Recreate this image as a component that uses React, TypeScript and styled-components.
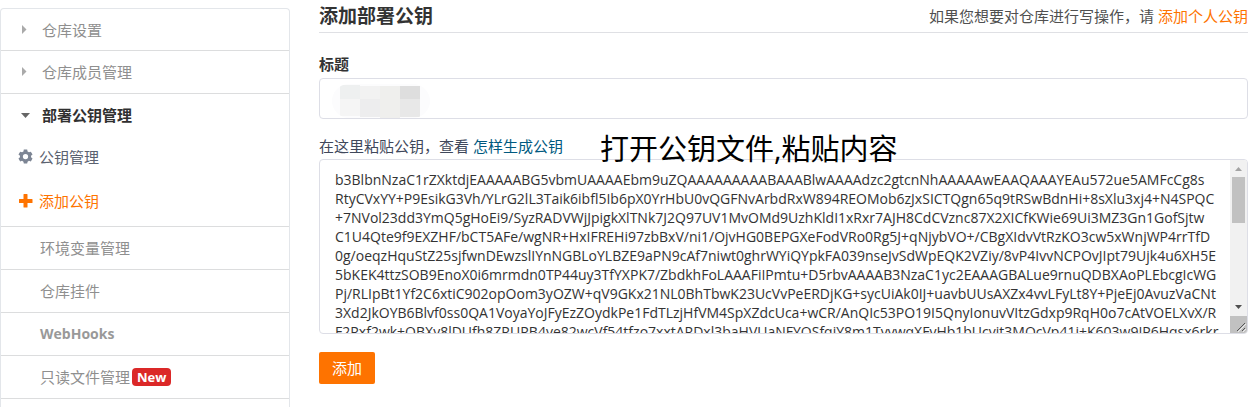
import React, { useState } from 'react';
import styled, { createGlobalStyle, css } from 'styled-components';

const GlobalStyle = createGlobalStyle`
  *, *::before, *::after { box-sizing: border-box; }
  html, body, #root { height: 100%; }
  body {
    margin: 0;
    overflow: hidden;
    background: #fff;
    color: #40485b;
    font: 15px/20px "Open Sans", "Noto Sans CJK SC", sans-serif;
  }
  a { text-decoration: none; }
`;

const Page = styled.div`
  display: flex;
  gap: 29px;
  height: 100%;
  padding-right: 3px;
  overflow: hidden;
`;

const Sidebar = styled.nav`
  flex: none;
  width: 290px;
  margin-top: 8px;
  border: 1px solid #e3e6ea;
  border-bottom: 0;
  border-radius: 4px 4px 0 0;
`;

const itemLayout = css`
  display: flex;
  align-items: center;
  width: 100%;
  height: 42px;
`;

const GroupButton = styled.button<{ $open?: boolean }>`
  ${itemLayout}
  gap: 11px;
  padding: 0 0 0 20px;
  border: 0;
  background: none;
  font: inherit;
  font-weight: ${p => (p.$open ? 700 : 400)};
  color: ${p => (p.$open ? '#303030' : '#8f8f8f')};
`;

const Section = styled.div`
  border-bottom: 1px solid #dcddde;
  &:first-child ${GroupButton} { height: 41px; }
`;

const Caret = styled.svg`
  flex: none;
  width: 10px;
  height: 10px;
`;

const PlainLink = styled.a`
  ${itemLayout}
  gap: 2px;
  padding-left: 39px;
  color: #8f8f8f;
`;

const Strong = styled.span`
  font-weight: 700;
  font-size: 14px;
  color: #999;
`;

const NewBadge = styled.span`
  padding: 0 5px;
  border-radius: 4px;
  background: #db2828;
  color: #fff;
  font-size: 13px;
  font-weight: 700;
  line-height: 18px;
`;

const SubLink = styled.a<{ $active?: boolean }>`
  ${itemLayout}
  height: 41px;
  gap: 6px;
  padding-left: 17px;
  color: ${p => (p.$active ? '#fe7300' : '#5b6270')};
  &:last-child { height: 49px; padding-bottom: 2px; }
`;

const SubIcon = styled.svg`
  flex: none;
  width: 15px;
  height: 15px;
`;

const Main = styled.main`
  flex: 1;
  min-width: 0;
`;

const Header = styled.header`
  display: flex;
  justify-content: space-between;
  align-items: center;
  height: 33px;
  border-bottom: 1px solid #dfe0e4;
`;

const Title = styled.h1`
  margin: 0;
  font-size: 19px;
  line-height: 28px;
  font-weight: 700;
  color: #333;
`;

const Hint = styled.p`
  margin: 0;
  color: #505050;
`;

const OrangeLink = styled.a`
  color: #fe7300;
`;

const Form = styled.form`
  display: flex;
  flex-direction: column;
  padding-top: 21px;
`;

const Label = styled.label`
  margin-bottom: 4px;
  font-weight: 700;
  color: #333;
`;

const TitleField = styled.div`
  position: relative;
  height: 41px;
`;

const TextInput = styled.input`
  width: 100%;
  height: 100%;
  padding: 0 15px;
  border: 1px solid #dddee6;
  border-radius: 4px;
  outline: 0;
  font: inherit;
`;

const Mosaic = styled.svg`
  position: absolute;
  left: 13px;
  top: 6px;
  width: 98px;
  height: 34px;
`;

const KeyRow = styled.div`
  position: relative;
  margin: 17px 0 3px;
`;

const KeyLink = styled.a`
  color: #005980;
`;

const Note = styled.span`
  position: absolute;
  left: 281px;
  top: -7px;
  z-index: 1;
  color: #000;
  font-size: 29px;
  line-height: 40px;
  white-space: nowrap;
  pointer-events: none;
`;

const KeyBox = styled.div`
  display: flex;
  height: 175px;
  border: 1px solid #dddee6;
  border-radius: 4px;
  overflow: hidden;
`;

const KeyText = styled.textarea`
  flex: 1;
  min-width: 0;
  padding: 10px 0 0 15px;
  border: 0;
  outline: 0;
  resize: none;
  background: none;
  color: #333;
  font: 14px/19px "Open Sans", sans-serif;
  white-space: pre;
  overflow: hidden auto;
  scrollbar-width: none;
`;

const ScrollBar = styled.div`
  display: flex;
  flex-direction: column;
  flex: none;
  width: 17px;
  background: #f1f1f1;
`;

const Arrow = styled.svg`
  flex: none;
  width: 17px;
  height: 17px;
`;

const Track = styled.div`
  flex: 1;
`;

const Thumb = styled.div`
  width: 13px;
  height: 46px;
  margin-left: 2px;
  background: #c1c1c1;
`;

const Submit = styled.button`
  align-self: flex-start;
  width: 56px;
  height: 32px;
  margin-top: 18px;
  padding: 0;
  border: 0;
  border-radius: 2px;
  background: #fe7300;
  color: #fff;
  font: inherit;
`;

const KEY = [
  'b3BlbnNzaC1rZXktdjEAAAAABG5vbmUAAAAEbm9uZQAAAAAAAAABAAABlwAAAAdzc2gtcnNhAAAAAwEAAQAAAYEAu572ue5AMFcCg8s',
  'RtyCVxYY+P9EsikG3Vh/YLrG2lL3Taik6ibfl5Ib6pX0YrHbU0vQGFNvArbdRxW894REOMob6zJxSICTQgn65q9tRSwBdnHi+8sXlu3xj4+N4SPQC',
  '+7NVol23dd3YmQ5gHoEi9/SyzRADVWjJpigkXlTNk7J2Q97UV1MvOMd9UzhKldI1xRxr7AJH8CdCVznc87X2XICfKWie69Ui3MZ3Gn1GofSjtw',
  'C1U4Qte9f9EXZHF/bCT5AFe/wgNR+HxIFREHi97zbBxV/ni1/OjvHG0BEPGXeFodVRo0Rg5J+qNjybVO+/CBgXIdvVtRzKO3cw5xWnjWP4rrTfD',
  '0g/oeqzHquStZ25sjfwnDEwzslIYnNGBLoYLBZE9aPN9cAf7niwt0ghrWYiQYpkFA039nseJvSdWpEQK2VZiy/8vP4IvvNCPOvJIpt79Ujk4u6XH5E',
  '5bKEK4ttzSOB9EnoX0i6mrmdn0TP44uy3TfYXPK7/ZbdkhFoLAAAFiIPmtu+D5rbvAAAAB3NzaC1yc2EAAAGBALue9rnuQDBXAoPLEbcgIcWG',
  'Pj/RLIpBt1Yf2C6xtiC902opOom3yOZW+qV9GKx21NL0BhTbwK23UcVvPeERDjKG+sycUiAk0IJ+uavbUUsAXZx4vvLFyLt8Y+PjeEj0AvuzVaCNt',
  '3Xd2JkOYB6Blvf0ss0QA1VoyaYoJFyEzZOydkPe1FdTLzjHfVM4SpXZdcUca+wCR/AnQIc53PO19I5QnyIonuvVItzGdxp9RqH0o7cAtVOELXvX/R',
  'F2Rxf2wk+QBXv8lDUfh8ZRURB4ve82wcVf54tfzo7xxtARDxl3baHVUaNFYQSfqiY8m1TvvwqXFvHb1bUcvit3MOcVp41i+K603w9IP6Hqsx6rkr',
].join('\n');

const GearIcon = () => (
  <SubIcon viewBox="0 0 16 16" fill="#7d8594" fillRule="evenodd">
    <path d="M6.2 0.6h3.6l.4 2 1.5.9 2-.7 1.8 3.1-1.6 1.3v1.7l1.6 1.3-1.8 3.1-2-.7-1.5.9-.4 2H6.2l-.4-2-1.5-.9-2 .7-1.8-3.1 1.6-1.3V7.2L.5 5.9l1.8-3.1 2 .7 1.5-.9zM8 5.200a2.800 2.800 0 1 0 0 5.600 2.800 2.800 0 0 0 0-5.600z" />
  </SubIcon>
);

const PlusIcon = () => (
  <SubIcon viewBox="0 0 15 15" fill="#fe7300">
    <path d="M6 1h3q.5 0 .5.5V6H14q.5 0 .5.5v3q0 .5-.5.5H9.500v4q0 .5-.5.5H6q-.5 0-.5-.5v-4H1.500q-.5 0-.5-.5v-3q0-.5.500-.5h4V1.500q0-.5.500-.5z" />
  </SubIcon>
);

const Group = ({ label, open }: { label: string; open?: boolean }) => (
  <GroupButton type="button" $open={open} aria-expanded={!!open}>
    <Caret viewBox="0 0 10 10" fill={open ? '#666' : '#aaa'}>
      <path d={open ? 'M0 3h9L4.500 8z' : 'M1 0v9L5.500 4.500z'} />
    </Caret>
    {label}
  </GroupButton>
);

export default function App() {
  const [scroll, setScroll] = useState(0);
  return (
    <>
      <GlobalStyle />
      <Page>
        <Sidebar>
          <Section><Group label="仓库设置" /></Section>
          <Section><Group label="仓库成员管理" /></Section>
          <Section>
            <Group label="部署公钥管理" open />
            <SubLink href="#keys"><GearIcon />公钥管理</SubLink>
            <SubLink href="#add" $active><PlusIcon />添加公钥</SubLink>
          </Section>
          <Section><PlainLink href="#env">环境变量管理</PlainLink></Section>
          <Section><PlainLink href="#widget">仓库挂件</PlainLink></Section>
          <Section><PlainLink href="#hooks"><Strong>WebHooks</Strong></PlainLink></Section>
          <Section><PlainLink href="#readonly">只读文件管理<NewBadge>New</NewBadge></PlainLink></Section>
        </Sidebar>
        <Main>
          <Header>
            <Title>添加部署公钥</Title>
            <Hint>如果您想要对仓库进行写操作，请 <OrangeLink href="#personal">添加个人公钥</OrangeLink></Hint>
          </Header>
          <Form onSubmit={e => e.preventDefault()}>
            <Label htmlFor="title">标题</Label>
            <TitleField>
              <TextInput id="title" type="text" />
              <Mosaic viewBox="0 0 98 34" shapeRendering="crispEdges" aria-hidden="true">
                <clipPath id="pill"><rect width="98" height="34" rx="17" /></clipPath>
                <g clipPath="url(#pill)">
                  <path fill="#fcfcfd" d="M0 0h98v34H0z" />
                  <path fill="#eef0f0" d="M8 1h20v14H8z" />
                  <path fill="#f2f2f2" d="M28 2h20v13H28z" />
                  <path fill="#efefed" d="M48 2h20v32H48z" />
                  <path fill="#dedede" d="M68 2h20v13H68z" />
                  <path fill="#f5f5f5" d="M8 15h20v17H8z" />
                  <path fill="#ededee" d="M28 15h20v18H28z" />
                  <path fill="#e8e8e8" d="M68 15h20v18H68z" />
                </g>
              </Mosaic>
            </TitleField>
            <KeyRow>
              <label htmlFor="key">在这里粘贴公钥，查看</label> <KeyLink href="#help">怎样生成公钥</KeyLink>
              <Note>打开公钥文件,粘贴内容</Note>
            </KeyRow>
            <KeyBox>
              <KeyText
                id="key"
                spellCheck={false}
                defaultValue={KEY}
                onScroll={e => {
                  const el = e.currentTarget;
                  setScroll(el.scrollTop / Math.max(1, el.scrollHeight - el.clientHeight));
                }}
              />
              <ScrollBar aria-hidden="true">
                <Arrow viewBox="0 0 17 17"><path fill="#a3a3a3" d="M5 11h7L8.500 7z" /></Arrow>
                <Track><Thumb style={{ marginTop: scroll * 75 }} /></Track>
                <Arrow viewBox="0 0 17 17"><path fill="#505050" d="M5 6h7L8.500 10z" /></Arrow>
                <Arrow viewBox="0 0 17 17">
                  <path fill="#c1c1c1" d="M0 0h17v17H0z" />
                  <path stroke="#555" strokeWidth="1" d="M7 15l8-8M12 15l3-3" />
                  <path stroke="#eee" strokeWidth="1" d="M8 16l8-8M13 16l3-3" />
                </Arrow>
              </ScrollBar>
            </KeyBox>
            <Submit type="submit">添加</Submit>
          </Form>
        </Main>
      </Page>
    </>
  );
}
